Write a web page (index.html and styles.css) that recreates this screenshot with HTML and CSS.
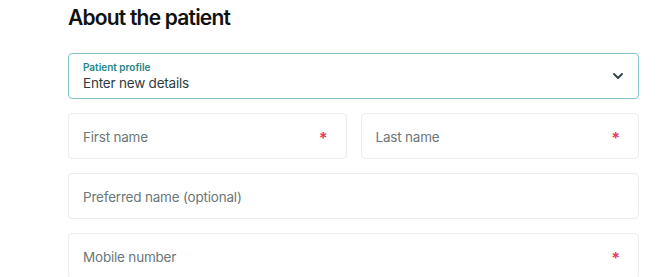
FILE: index.html
```html
<!DOCTYPE html>
<html lang="en">
<head>
  <meta charset="UTF-8">
  <meta name="viewport" content="width=device-width, initial-scale=1.0">
  <title>About the patient</title>
  <link rel="stylesheet" href="styles.css">
</head>
<body>
  <div class="wrapper">
    <h2>About the patient</h2>
    <div class="select">
      <div class="select-text">
        <span class="select-label">Patient profile</span>
        <span class="select-value">Enter new details</span>
      </div>
      <svg class="chevron" width="12" height="8" viewBox="0 0 12 8">
        <path d="M2 2l4 4 4-4" fill="none" stroke="#36474b" stroke-width="2" stroke-linecap="round" stroke-linejoin="round"/>
      </svg>
    </div>
    <div class="row">
      <div class="field">
        <span>First name</span>
        <span class="required">*</span>
      </div>
      <div class="field">
        <span>Last name</span>
        <span class="required">*</span>
      </div>
    </div>
    <div class="field">
      <span>Preferred name (optional)</span>
    </div>
    <div class="field">
      <span>Mobile number</span>
      <span class="required">*</span>
    </div>
  </div>
</body>
</html>
```

FILE: styles.css
```css
body {
  margin: 0;
  font-family: Inter, "Noto Sans", sans-serif;
  background: #fff;
  color: #111;
}
.wrapper {
  width: 571px;
  margin-left: 68px;
  display: flex;
  flex-direction: column;
  gap: 14px;
}
h2 {
  font-size: 21px;
  font-weight: 600;
  letter-spacing: -0.8px;
  margin: 5px 0 5px;
  line-height: 26px;
}
.select {
  height: 46px;
  box-sizing: border-box;
  border: 1px solid #86c5c5;
  border-radius: 4px;
  padding: 0 14px 0 14px;
  display: flex;
  align-items: center;
  justify-content: space-between;
  margin-top: 3px;
}
.select-text {
  display: flex;
  flex-direction: column;
  padding-top: 1px;
}
.select-label {
  font-size: 10px;
  font-weight: 600;
  color: #1b8685;
  line-height: 12px;
}
.select-value {
  font-size: 13.5px;
  letter-spacing: -0.2px;
  color: #2e3b3e;
  line-height: 20px;
}
.row {
  display: flex;
  gap: 14px;
}
.row .field {
  flex: 1;
}
.field {
  height: 46px;
  box-sizing: border-box;
  border: 1px solid #ececec;
  border-radius: 4px;
  padding: 2px 18px 0 14px;
  display: flex;
  align-items: center;
  justify-content: space-between;
  font-size: 13.5px;
  letter-spacing: -0.2px;
  color: #6b7779;
}
.required {
  color: #e83a5e;
  font-size: 16px;
  font-weight: 700;
  line-height: 1;
  margin-top: 2px;
}
```
